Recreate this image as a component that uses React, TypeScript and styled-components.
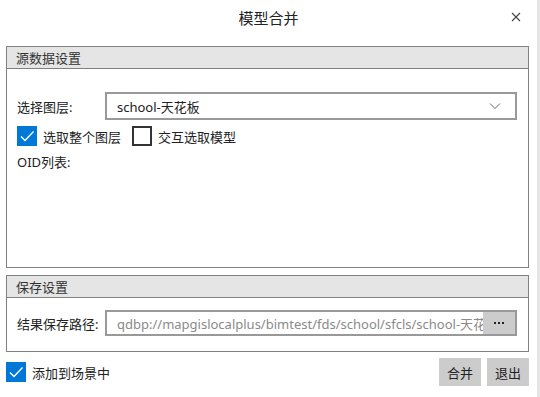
import React from "react";
import styled, { createGlobalStyle } from "styled-components";

const Global = createGlobalStyle`
  html, body { margin: 0; padding: 0; background: #fff; }
  body { font-family: "Noto Sans", "Noto Sans CJK SC", sans-serif; font-size: 13px; color: #222; }
  * { box-sizing: border-box; }
`;

const Dialog = styled.div`
  width: 540px;
  height: 397px;
  background: #fff;
  border-right: 3px solid #e6e6e6;
  display: flex;
  flex-direction: column;
  overflow: hidden;
`;

const TitleBar = styled.div`
  height: 34px;
  position: relative;
  display: flex;
  align-items: center;
  justify-content: center;
  font-size: 15px;
  color: #222;
`;

const Close = styled.div`
  position: absolute;
  right: 14px;
  top: 8px;
  width: 14px;
  height: 18px;
  display: flex;
  align-items: center;
  justify-content: center;
`;

const Group = styled.div<{ $h: number; $mt: number }>`
  margin: ${(p) => p.$mt}px 0 0 6px;
  width: 523px;
  height: ${(p) => p.$h}px;
  border: 1px solid #808080;
  display: flex;
  flex-direction: column;
`;

const GroupHeader = styled.div`
  height: 22px;
  background: #e5e5e5;
  border-bottom: 1px solid #808080;
  padding-left: 9px;
  display: flex;
  align-items: center;
  font-size: 13px;
  color: #333;
`;

const GroupBody = styled.div<{ $pt: number }>`
  padding: ${(p) => p.$pt}px 11px 0 10px;
  display: flex;
  flex-direction: column;
`;

const Row = styled.div<{ $h: number; $mt?: number }>`
  display: flex;
  align-items: center;
  height: ${(p) => p.$h}px;
  margin-top: ${(p) => p.$mt ?? 0}px;
`;

const Label = styled.div`
  width: 88px;
  flex: none;
  color: #222;
`;

const Combo = styled.div`
  flex: 1;
  height: 28px;
  border: 2px solid #999;
  display: flex;
  align-items: center;
  padding: 0 14px 0 10px;
  justify-content: space-between;
  color: #222;
`;

const PathBox = styled.div`
  flex: 1;
  height: 26px;
  border: 2px solid #999;
  display: flex;
  align-items: stretch;
  overflow: hidden;
`;

const PathText = styled.div`
  flex: 1;
  min-width: 0;
  padding-left: 10px;
  color: #8a8a8a;
  white-space: nowrap;
  overflow: hidden;
  display: flex;
  align-items: center;
`;

const DotsButton = styled.div`
  width: 32px;
  flex: none;
  background: #cccccc;
  display: flex;
  align-items: center;
  justify-content: center;
  gap: 2px;
`;

const Dot = styled.span`
  width: 2px;
  height: 2px;
  background: #222;
`;

const Box = styled.div<{ $checked: boolean }>`
  width: 20px;
  height: 20px;
  flex: none;
  background: ${(p) => (p.$checked ? "#0078d7" : "#fff")};
  border: ${(p) => (p.$checked ? "none" : "2px solid #333")};
  display: flex;
  align-items: center;
  justify-content: center;
`;

const CheckLabel = styled.span`
  margin-left: 6px;
  color: #222;
`;

const CheckWrap = styled.div<{ $ml?: number }>`
  display: flex;
  align-items: center;
  margin-left: ${(p) => p.$ml ?? 0}px;
`;

const Footer = styled.div`
  margin-top: 6px;
  padding: 0 8px 0 6px;
  display: flex;
  align-items: center;
  height: 28px;
`;

const Spacer = styled.div`
  flex: 1;
`;

const Button = styled.div`
  width: 42px;
  height: 28px;
  background: #cccccc;
  display: flex;
  align-items: center;
  justify-content: center;
  color: #222;
  margin-left: 6px;
`;

const Check = ({ checked, label, ml }: { checked: boolean; label: string; ml?: number }) => (
  <CheckWrap $ml={ml}>
    <Box $checked={checked}>
      {checked && (
        <svg width="16" height="16" viewBox="0 0 16 16">
          <path d="M2 8.5 L6 12.5 L14.5 3.5" fill="none" stroke="#fff" strokeWidth="1.4" />
        </svg>
      )}
    </Box>
    <CheckLabel>{label}</CheckLabel>
  </CheckWrap>
);

export default function App() {
  return (
    <>
      <Global />
      <Dialog>
        <TitleBar>
          模型合并
          <Close>
            <svg width="10" height="10" viewBox="0 0 10 10">
              <path d="M1 1 L9 9 M9 1 L1 9" stroke="#444" strokeWidth="1.1" />
            </svg>
          </Close>
        </TitleBar>
        <Group $h={222} $mt={12}>
          <GroupHeader>源数据设置</GroupHeader>
          <GroupBody $pt={23}>
            <Row $h={28}>
              <Label>选择图层:</Label>
              <Combo>
                <span>school-天花板</span>
                <svg width="12" height="8" viewBox="0 0 12 8">
                  <path d="M1 1.5 L6 6.5 L11 1.5" fill="none" stroke="#666" strokeWidth="1" />
                </svg>
              </Combo>
            </Row>
            <Row $h={20} $mt={6}>
              <Check checked label="选取整个图层" />
              <Check checked={false} label="交互选取模型" ml={11} />
            </Row>
            <Row $h={18} $mt={6}>
              <span>OID列表:</span>
            </Row>
          </GroupBody>
        </Group>
        <Group $h={77} $mt={7}>
          <GroupHeader>保存设置</GroupHeader>
          <GroupBody $pt={12}>
            <Row $h={26}>
              <Label>结果保存路径:</Label>
              <PathBox>
                <PathText>qdbp://mapgislocalplus/bimtest/fds/school/sfcls/school-天花板</PathText>
                <DotsButton>
                  <Dot />
                  <Dot />
                  <Dot />
                </DotsButton>
              </PathBox>
            </Row>
          </GroupBody>
        </Group>
        <Footer>
          <Check checked label="添加到场景中" />
          <Spacer />
          <Button>合并</Button>
          <Button>退出</Button>
        </Footer>
      </Dialog>
    </>
  );
}
